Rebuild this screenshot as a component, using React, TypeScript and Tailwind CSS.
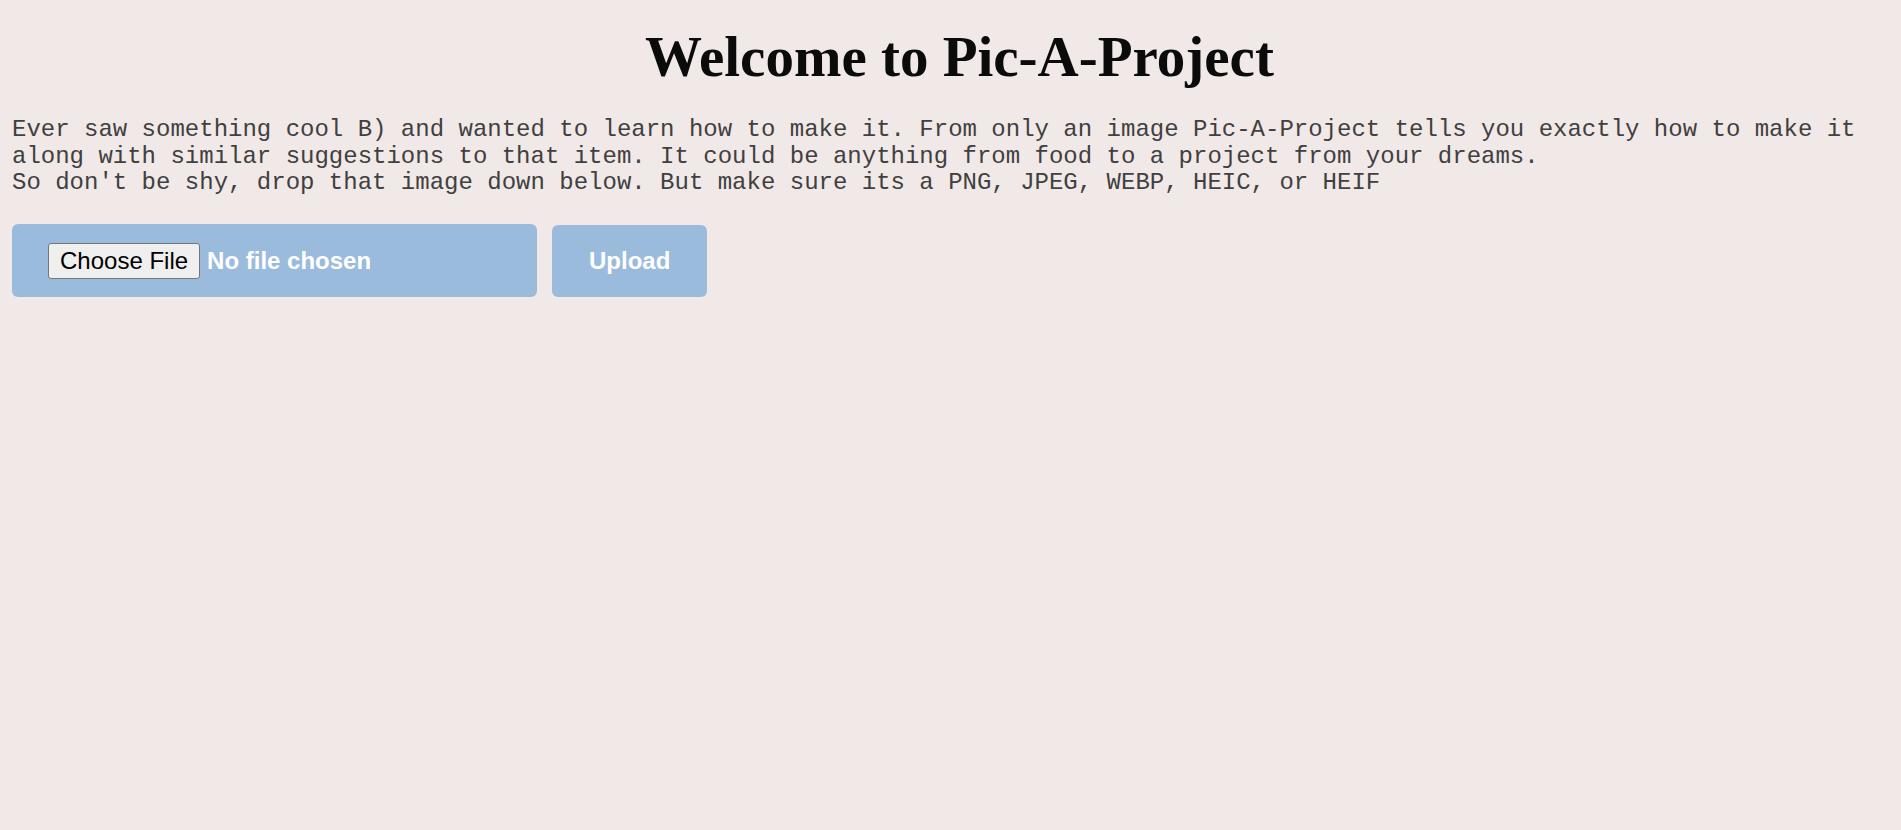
export default function App() {
  return (
    <div className="min-h-[830px] w-full bg-[#f1e9e7] px-[12px] pt-[25px]">
      <h1
        className="pl-[18px] text-center text-[57px] font-bold leading-[64px] text-[#0b0b0b]"
        style={{ fontFamily: '"Liberation Serif", "Times New Roman", serif' }}
      >
        Welcome to Pic-A-Project
      </h1>
      <p
        className="mt-[28px] text-[24px] leading-[26.7px] text-[#404040]"
        style={{ fontFamily: '"Liberation Mono", "Courier New", monospace' }}
      >
        Ever saw something cool B) and wanted to learn how to make it. From only an image Pic-A-Project tells you exactly how to make it
        <br />
        along with similar suggestions to that item. It could be anything from food to a project from your dreams.
        <br />
        So don't be shy, drop that image down below. But make sure its a PNG, JPEG, WEBP, HEIC, or HEIF
      </p>
      <div
        className="mt-[27px] flex items-stretch gap-[15px]"
        style={{ fontFamily: '"Liberation Sans", Arial, sans-serif' }}
      >
        <div className="flex h-[73px] w-[525px] items-center rounded-[6px] bg-[#9bbbdc] pl-[36px]">
          <div className="flex h-[36px] items-center rounded-[3px] border border-[#767676] bg-[#efefef] px-[11px] text-[24px] leading-none text-black">
            Choose File
          </div>
          <span className="ml-[7px] text-[24px] font-bold text-white">No file chosen</span>
        </div>
        <div className="mt-[1px] flex h-[72px] items-center rounded-[6px] bg-[#9bbbdc] px-[37px] text-[24px] font-bold text-white">
          Upload
        </div>
      </div>
    </div>
  );
}
